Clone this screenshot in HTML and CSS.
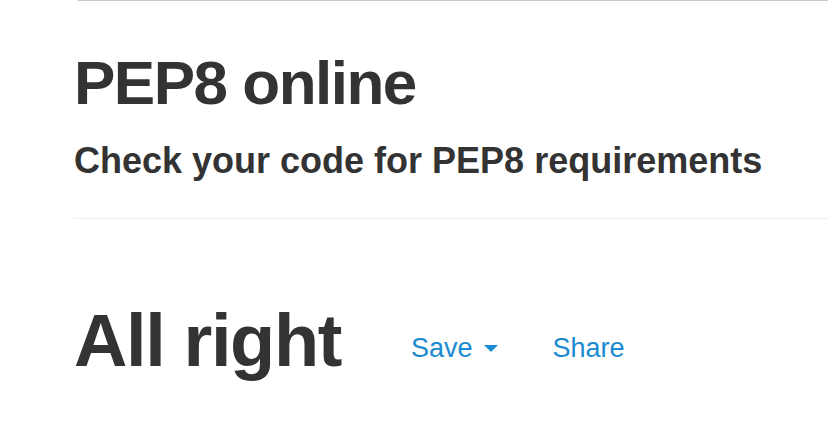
FILE: index.html
```html
<!DOCTYPE html>
<html lang="en">
<head>
<meta charset="utf-8">
<title>PEP8 online</title>
<link rel="stylesheet" href="styles.css">
</head>
<body>
<div class="navbar-edge"></div>
<main class="container">
  <div class="page-header">
    <h1 class="title">PEP8 online</h1>
    <h2 class="subtitle">Check your code for PEP8 requirements</h2>
  </div>
  <div class="result-row">
    <h2 class="result">All right</h2>
    <div class="actions">
      <a class="action" href="#">Save <span class="caret"></span></a>
      <a class="action" href="#">Share</a>
    </div>
  </div>
</main>
</body>
</html>
```

FILE: styles.css
```css
html, body {
  margin: 0;
  padding: 0;
  background: #ffffff;
  overflow: hidden;
}

body {
  font-family: "Liberation Sans", Arial, Helvetica, sans-serif;
  color: #333333;
  width: 828px;
  height: 423px;
}

.navbar-edge {
  height: 1px;
  margin-left: 78px;
  background: #c9c9c9;
  box-shadow: 0 1px 8px rgba(0, 0, 0, 0.12);
}

.container {
  padding-left: 74px;
}

.page-header {
  border-bottom: 1px solid #eeeeee;
  padding-bottom: 39px;
}

.title {
  margin: 51px 0 0 0;
  font-size: 62px;
  line-height: 62px;
  font-weight: 700;
  letter-spacing: -1.5px;
}

.subtitle {
  margin: 29px 0 0 0;
  font-size: 36px;
  line-height: 36px;
  font-weight: 700;
}

.result-row {
  display: flex;
  align-items: flex-start;
  margin-top: 85px;
}

.result {
  margin: 0;
  font-size: 74px;
  line-height: 74px;
  font-weight: 700;
  letter-spacing: -1.4px;
}

.actions {
  display: flex;
  align-items: center;
  gap: 54px;
  margin-top: 31px;
  margin-left: 70px;
}

.action {
  display: flex;
  align-items: center;
  gap: 12px;
  font-size: 27px;
  line-height: 27px;
  color: #1a8bd1;
  text-decoration: none;
}

.caret {
  display: block;
  width: 0;
  height: 0;
  border-left: 7.5px solid transparent;
  border-right: 7.5px solid transparent;
  border-top: 7px solid #1a8bd1;
}
```
